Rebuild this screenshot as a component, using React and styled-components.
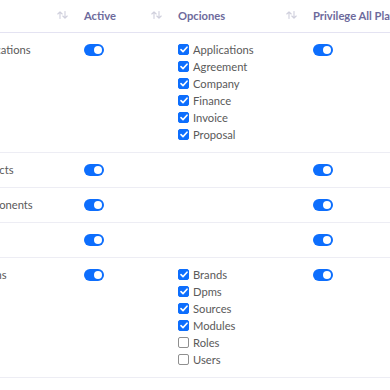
import React from "react";
import styled, { createGlobalStyle } from "styled-components";

const GlobalStyle = createGlobalStyle`
  html, body {
    margin: 0;
    padding: 0;
    background: #ffffff;
  }
  body {
    font-family: Lato, "Open Sans", sans-serif;
  }
`

const Viewport = styled.div`
  width: 390px;
  height: 390px;
  overflow: hidden;
  background: #fff;
`
const Table = styled.div`
  margin-left: -40px;
  width: 520px;
`
const HeaderRow = styled.div`
  display: grid;
  grid-template-columns: 124px 94px 135px 1fr;
  height: 32px;
  border-bottom: 1px solid #e4e3f2;
`
const HeaderCell = styled.div`
  display: flex;
  align-items: center;
  justify-content: space-between;
  padding-right: 16px;
  padding-left: ${p => (p.$first ? "10px" : "0")};
  padding-bottom: 2px;
  font-size: 11.2px;
  font-weight: 700;
  color: #6d6a9c;
  white-space: nowrap;
`
const Row = styled.div`
  display: grid;
  grid-template-columns: 124px 94px 135px 1fr;
  padding: 8px 0 9px;
  border-bottom: 1px solid #ededf4;
`
const Cell = styled.div`
  padding-left: ${p => (p.$first ? "10px" : "0")};
  font-size: 11.2px;
  line-height: 17px;
  color: #5a5a5a;
  white-space: nowrap;
`
const Toggle = styled.span`
  display: inline-block;
  position: relative;
  width: 20px;
  height: 12px;
  margin-top: 2.5px;
  border-radius: 6px;
  background: #0d6efd;
  vertical-align: top;
  &::after {
    content: "";
    position: absolute;
    top: 2px;
    right: 2px;
    width: 8px;
    height: 8px;
    border-radius: 50%;
    background: #fff;
  }
`
const OptionList = styled.div`
  display: flex;
  flex-direction: column;
`
const Option = styled.label`
  display: flex;
  align-items: center;
  gap: 4px;
  height: 17px;
`
const Box = styled.span`
  display: inline-flex;
  align-items: center;
  justify-content: center;
  box-sizing: border-box;
  flex: none;
  width: 11px;
  height: 11px;
  border-radius: 2px;
  background: ${p => (p.$checked ? "#0d6efd" : "#fff")};
  border: 1px solid ${p => (p.$checked ? "#0d6efd" : "#8f8f8f")};
`

function SortIcon() {
  return (
    <svg width="11" height="8" viewBox="0 0 11 8" fill="none" stroke="#cfcfdc" strokeWidth="1.1" strokeLinecap="round" strokeLinejoin="round">
      <path d="M3 7.5V0.8M0.8 3L3 0.8L5.2 3" />
      <path d="M8 0.5V7.2M5.8 5L8 7.2L10.2 5" />
    </svg>
  )
}

function Check({ checked }) {
  return (
    <Box $checked={checked}>
      {checked && (
        <svg width="8" height="7" viewBox="0 0 8 7" fill="none" stroke="#fff" strokeWidth="1.6" strokeLinecap="round" strokeLinejoin="round">
          <path d="M1 3.6L3 5.6L7 1.2" />
        </svg>
      )}
    </Box>
  )
}

const rows = [
  { name: "Applications", privilege: true, options: [
    ["Applications", true], ["Agreement", true], ["Company", true],
    ["Finance", true], ["Invoice", true], ["Proposal", true],
  ] },
  { name: "Products", privilege: true, options: [] },
  { name: "Components", privilege: true, options: [] },
  { name: "Menu", privilege: true, options: [] },
  { name: "Admins", privilege: true, options: [
    ["Brands", true], ["Dpms", true], ["Sources", true],
    ["Modules", true], ["Roles", false], ["Users", false],
  ] },
]

export default function App() {
  return (
    <Viewport>
      <GlobalStyle />
      <Table>
        <HeaderRow>
          <HeaderCell $first>Menu<SortIcon /></HeaderCell>
          <HeaderCell>Active<SortIcon /></HeaderCell>
          <HeaderCell>Opciones<SortIcon /></HeaderCell>
          <HeaderCell>Privilege All Platform</HeaderCell>
        </HeaderRow>
        {rows.map(r => (
          <Row key={r.name}>
            <Cell $first>{r.name}</Cell>
            <Cell><Toggle /></Cell>
            <Cell>
              <OptionList>
                {r.options.map(([label, on]) => (
                  <Option key={label}>
                    <Check checked={on} />
                    {label}
                  </Option>
                ))}
              </OptionList>
            </Cell>
            <Cell>{r.privilege && <Toggle />}</Cell>
          </Row>
        ))}
      </Table>
    </Viewport>
  )
}
